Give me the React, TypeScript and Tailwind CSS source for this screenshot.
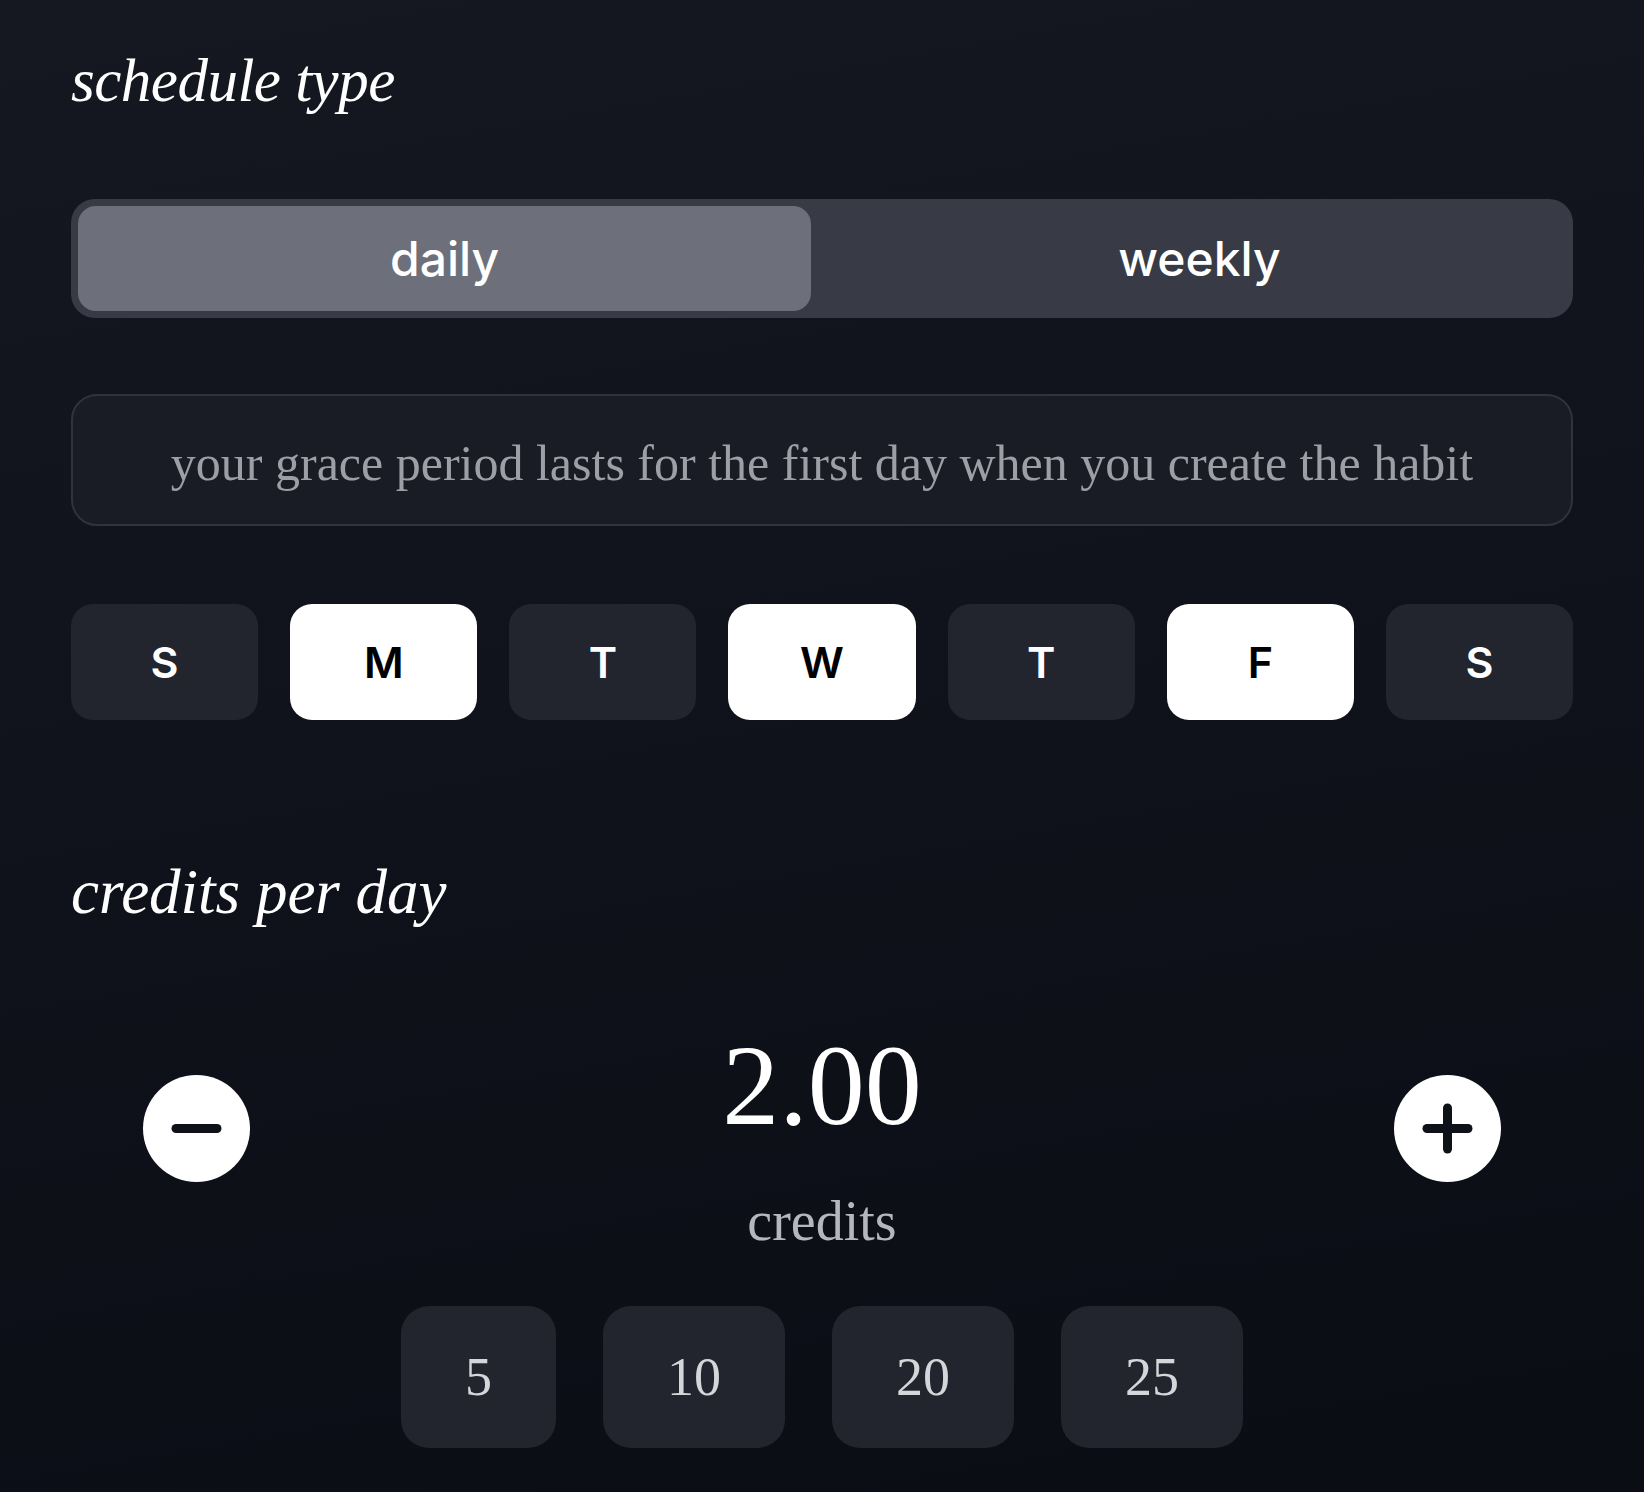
import React from "react";

const serif = { fontFamily: '"Liberation Serif", "Times New Roman", serif' };

export default function App() {
  const days = [
    { l: "S", on: false },
    { l: "M", on: true },
    { l: "T", on: false },
    { l: "W", on: true },
    { l: "T", on: false },
    { l: "F", on: true },
    { l: "S", on: false },
  ];
  const presets = ["5", "10", "20", "25"];
  return (
    <div className="min-h-[1492px] w-full bg-[linear-gradient(170deg,#151821_0%,#0f121a_50%,#0a0d14_100%)] px-[71px] pt-[50px] font-['Inter',sans-serif]">
      <h2 className="text-[61px] leading-none italic text-white font-['Liberation_Serif',serif] tracking-[-0.5px]">
        schedule type
      </h2>

      <div className="mt-[88px] h-[119px] rounded-[24px] bg-[#383b45] p-[7px] flex gap-[22px]">
        <button className="flex-1 rounded-[18px] bg-[#6d707a] text-white text-[48px] font-medium leading-none flex items-center justify-center">
          daily
        </button>
        <button className="flex-1 rounded-[18px] text-white text-[48px] font-medium leading-none flex items-center justify-center">
          weekly
        </button>
      </div>

      <div className="mt-[76px] h-[132px] rounded-[26px] border-2 border-[#2f333c] bg-[#191c24] flex items-center justify-center">
        <p className="text-[50px] leading-none text-[#9c9fa6] font-['Liberation_Serif',serif] pt-[6px]">
          your grace period lasts for the first day when you create the habit
        </p>
      </div>

      <div className="mt-[78px] flex gap-[32px]">
        {days.map((d, i) => (
          <div
            key={i}
            className={
              "flex-1 h-[116px] rounded-[22px] flex items-center justify-center text-[43px] font-semibold leading-none " +
              (d.on ? "bg-white text-black" : "bg-[#22252d] text-white")
            }
          >
            {d.l}
          </div>
        ))}
      </div>

      <h2 className="mt-[141px] text-[63px] leading-none italic text-white font-['Liberation_Serif',serif]">
        credits per day
      </h2>

      <div className="mt-[105px] flex items-start justify-between px-[72px]">
        <button className="mt-[46px] w-[107px] h-[107px] rounded-full bg-white flex items-center justify-center">
          <svg width="107" height="107" viewBox="0 0 107 107">
            <line x1="33" y1="53.5" x2="74" y2="53.5" stroke="#0e1118" strokeWidth="9" strokeLinecap="round" />
          </svg>
        </button>
        <div className="flex flex-col items-center" style={serif}>
          <div className="text-[114px] leading-none text-white">2.00</div>
          <div className="mt-[50px] text-[56px] leading-none text-[#b5b7bc]">credits</div>
        </div>
        <button className="mt-[46px] w-[107px] h-[107px] rounded-full bg-white flex items-center justify-center">
          <svg width="107" height="107" viewBox="0 0 107 107">
            <line x1="33" y1="53.5" x2="74" y2="53.5" stroke="#0e1118" strokeWidth="9" strokeLinecap="round" />
            <line x1="53.5" y1="33" x2="53.5" y2="74" stroke="#0e1118" strokeWidth="9" strokeLinecap="round" />
          </svg>
        </button>
      </div>

      <div className="mt-[57px] flex justify-center gap-[47px]">
        {presets.map((p) => (
          <div
            key={p}
            className="h-[142px] px-[64px] rounded-[28px] bg-[#22252d] flex items-center justify-center text-[54px] leading-none text-[#d4d6da] font-['Liberation_Serif',serif]"
          >
            {p}
          </div>
        ))}
      </div>
    </div>
  );
}
